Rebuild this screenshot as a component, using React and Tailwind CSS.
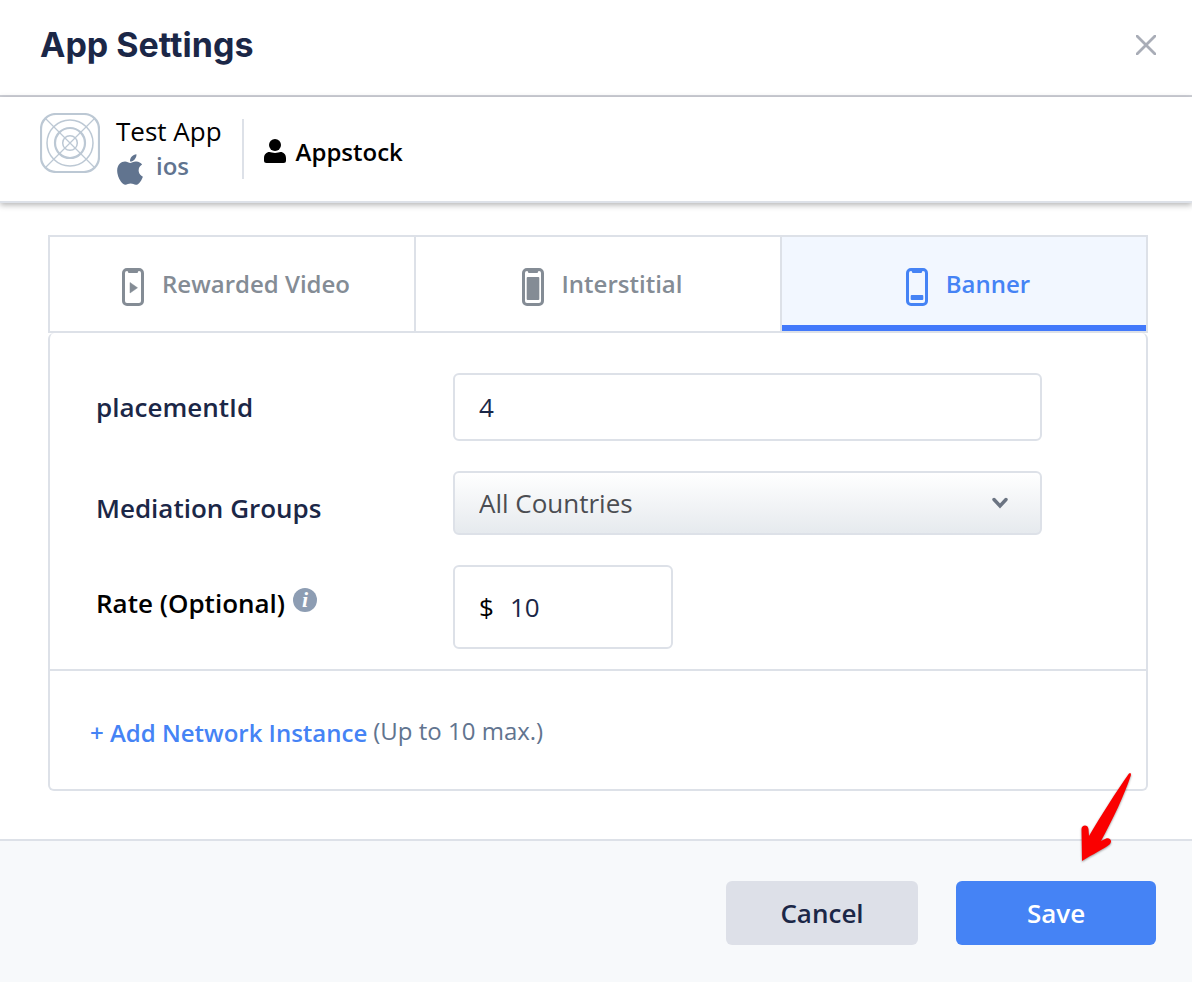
import { useState } from "react";
import { FaApple } from "react-icons/fa";

function AppGlyph() {
  return (
    <svg viewBox="0 0 60 60" className="size-15 shrink-0" fill="none" stroke="#bcc8d4" aria-hidden="true">
      <rect x="1" y="1" width="58" height="58" rx="15" strokeWidth="2.200" />
      <path d="M6 6 54 54M54 6 6 54" strokeWidth="1.200" />
      <circle cx="30" cy="30" r="23" strokeWidth="1.500" />
      <circle cx="30" cy="30" r="15" strokeWidth="2.200" />
      <circle cx="30" cy="30" r="7.3" strokeWidth="1.500" />
    </svg>
  );
}

function UserGlyph() {
  return (
    <svg viewBox="0 0 22 24" className="h-6 w-[22px]" fill="currentColor" aria-hidden="true">
      <circle cx="11" cy="6" r="6" />
      <path d="M5.5 13C7 13 8.500 14 11 14s4-1 5.500-1C19.500 13 22 15.500 22 19v2.500a2.500 2.500 0 0 1-2.500 2.500h-17A2.500 2.500 0 0 1 0 21.500V19C0 15.500 2.500 13 5.500 13Z" />
    </svg>
  );
}

function PhoneGlyph({ kind }) {
  return (
    <svg viewBox="0 0 22 38" className="h-[38px] w-[22px]" fill="currentColor" aria-hidden="true">
      <path
        fillRule="evenodd"
        d="M5 0h12a5 5 0 0 1 5 5v28a5 5 0 0 1-5 5H5a5 5 0 0 1-5-5V5a5 5 0 0 1 5-5ZM5 3A2 2 0 0 0 3 5v28A2 2 0 0 0 5 35h12a2 2 0 0 0 2-2v-28A2 2 0 0 0 17 3C15.500 3 16.500 5 15 5H7C5.500 5 6.500 3 5 3Z"
      />
      {kind === "video" && <path d="M8 14.500v10.500l7.500-5.200Z" stroke="currentColor" strokeWidth=".5" strokeLinejoin="round" />}
      {kind === "full" && <rect x="4.700" y="9" width="12.600" height="23" rx="1" />}
      {kind === "banner" && <rect x="4.700" y="27" width="12.600" height="5" rx="1" />}
    </svg>
  );
}

const TABS = [
  { label: "Rewarded Video", kind: "video" },
  { label: "Interstitial", kind: "full" },
  { label: "Banner", kind: "banner" },
];

export default function App() {
  const [active, setActive] = useState("banner");

  return (
    <div className="flex min-h-screen flex-col bg-white font-['Open_Sans',sans-serif] text-[#1b2747]">
      <header className="flex h-[97px] items-center justify-between border-b-2 border-[#cfd1d8] pr-9 pb-1.5 pl-10">
        <h1 className="font-['Inter',sans-serif] text-[34px] leading-10 font-bold">App Settings</h1>
        <button type="button" aria-label="Close" className="text-[#a9adb7]">
          <svg viewBox="0 0 20 20" className="size-5" fill="none" stroke="currentColor" strokeWidth="2.800" strokeLinecap="round">
            <path d="M1 1 19 19M19 1 1 19" />
          </svg>
        </button>
      </header>

      <section className="flex border-b-2 border-[#dde1e8] px-10 pt-4 pb-4 shadow-[0_2px_6px_rgba(0,0,0,0.3)]">
        <AppGlyph />
        <div className="ml-4 pr-5">
          <div className="text-[26px] leading-9 text-black">Test App</div>
          <div className="flex h-9 items-center gap-3 text-2xl leading-9 font-semibold text-[#61748f]">
            <span className="pt-1">
              <FaApple className="h-[35px] w-7" aria-hidden="true" />
            </span>
            <span className="pb-0.5">ios</span>
          </div>
        </div>
        <div className="mt-1.5 flex h-15 items-center gap-2.5 border-l-2 border-[#dde1e8] pl-5 text-black">
          <span className="pt-1">
            <UserGlyph />
          </span>
          <span className="pt-1.5 text-2xl leading-9 font-semibold">Appstock</span>
        </div>
      </section>

      <main className="px-12 pr-11 pt-8 pb-12">
        <div role="tablist" className="grid grid-cols-3 gap-0.5 border-2 border-[#dde1e8] bg-[#dde1e8]">
          {TABS.map((tab) => (
            <button
              key={tab.kind}
              type="button"
              role="tab"
              aria-selected={active === tab.kind}
              onClick={() => setActive(tab.kind)}
              className={`flex h-[94px] items-center justify-center gap-[18px] pl-2 text-2xl font-semibold ${
                active === tab.kind ? "bg-[#f2f7ff] text-[#4583f5] shadow-[inset_0_-6px_0_#4279fb]" : "bg-white text-[#848c95]"
              }`}
            >
              <span className="pt-1.5">
                <PhoneGlyph kind={tab.kind} />
              </span>
              <span>{tab.label}</span>
            </button>
          ))}
        </div>

        <form className="rounded-md border-2 border-t-0 border-[#dde1e8]">
          <div className="grid grid-cols-[357px_1fr] items-center gap-y-[30px] border-b-2 border-[#dde1e8] pt-10 pr-[104px] pb-5 pl-[46px] text-[26px] font-semibold">
            <label htmlFor="placement">placementId</label>
            <input
              id="placement"
              defaultValue="4"
              className="h-[68px] w-full min-w-0 rounded-md border-2 border-[#dde1e8] px-6 font-normal"
            />

            <label htmlFor="groups" className="pt-2.5">Mediation Groups</label>
            <div className="relative h-16">
              <select
                id="groups"
                className="size-full appearance-none rounded-md border-2 border-[#dde1e8] bg-linear-to-b from-white to-[#e6eaee] px-6 font-normal text-[#4b4d52]"
              >
                <option>All Countries</option>
              </select>
              <svg viewBox="0 0 16 12" className="pointer-events-none absolute top-[26px] right-[34px] h-3 w-4" fill="none" stroke="#6b7482" strokeWidth="3.400" strokeLinecap="round" aria-hidden="true">
                <path d="M2 2.500 8 9 14 2.500" />
              </svg>
            </div>

            <div className="flex items-start gap-2 pb-2 text-black">
              <label htmlFor="rate">Rate (Optional)</label>
              <button
                type="button"
                aria-label="About the rate"
                className="mt-1 flex size-6 items-center justify-center rounded-full bg-[#8d9db3] font-['Liberation_Serif',serif] text-[22px] leading-6 font-bold text-white italic"
              >
                i
              </button>
            </div>
            <div className="flex h-[84px] w-[220px] items-center gap-4 rounded-md border-2 border-[#dde1e8] px-6 font-normal">
              <span className="text-black">$</span>
              <input id="rate" defaultValue="10" className="w-full min-w-0 outline-none" />
            </div>
          </div>

          <div className="flex h-[118px] items-center gap-1.5 pl-10 text-2xl">
            <button type="button" className="pt-1.5 font-semibold text-[#4583f5]">+ Add Network Instance</button>
            <span className="pt-0.5 text-[#61748f]">(Up to 10 max.)</span>
          </div>
        </form>
      </main>

      <footer className="relative flex grow items-start justify-end gap-[38px] border-t-2 border-[#dde1e8] bg-[#f7f9fb] px-9 pt-10 pb-9 text-[26px] font-semibold">
        <button type="button" className="h-16 w-48 rounded-md bg-[#dde0e8]">Cancel</button>
        <button type="button" className="h-16 w-[200px] rounded-md bg-[#4583f5] text-white">Save</button>
        <svg viewBox="0 0 54 92" className="pointer-events-none absolute -top-[72px] right-[59px] h-[92px] w-[54px] drop-shadow-[0_1px_1px_rgba(0,0,0,0.4)]" fill="#fa0000" aria-hidden="true">
          <path d="M50 4.500Q52 3 52 6C45 27 34 50 22 72L27 69.500C31 68 34 72 30.500 75.500C25 80 14 85 3 92L2.500 60C2.500 55.500 9 55 9.500 60L10 67C23 45 37 23 50 4.500Z" />
        </svg>
      </footer>
    </div>
  );
}
